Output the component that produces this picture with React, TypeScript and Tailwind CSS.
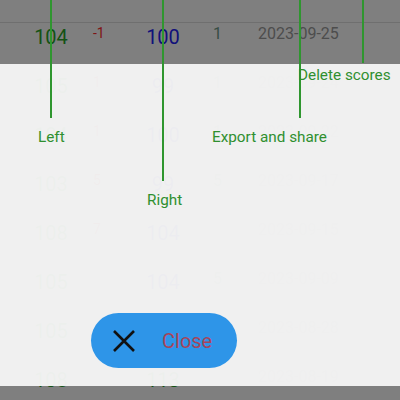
import React from "react";

type Row = {
  left: string;
  diff: string;
  right: string;
  games: string;
  date: string;
  rightColor?: string;
};

const rows: Row[] = [
  { left: "104", diff: "-1", right: "100", games: "1", date: "2023-09-25" },
  { left: "105", diff: "1", right: "99", games: "1", date: "2023-09-24" },
  { left: "104", diff: "1", right: "100", games: "1", date: "2023-09-22" },
  { left: "103", diff: "5", right: "99", games: "5", date: "2023-09-17" },
  { left: "108", diff: "7", right: "104", games: "", date: "2023-09-15" },
  { left: "105", diff: "", right: "104", games: "5", date: "2023-09-09" },
  { left: "105", diff: "", right: "109", games: "4", date: "2023-08-28" },
  { left: "108", diff: "", right: "113", games: "", date: "2023-08-19", rightColor: "text-[#2aa52a]" },
];

const ScoreRow = ({ row }: { row: Row }) => (
  <div className="flex h-[49px] items-start border-t border-[#dedede]">
    <div className="w-[90px] pl-[12px] text-center text-[20px] leading-[28px] text-[#2aa52a]">
      {row.left}
    </div>
    <div className="w-[30px] pl-[3px] text-[14px] leading-[20px] text-[#ff2a2a]">
      {row.diff}
    </div>
    <div
      className={`w-[86px] text-center text-[20px] leading-[28px] ${row.rightColor ?? "text-[#2323f5]"}`}
    >
      {row.right}
    </div>
    <div className="w-[44px] pl-[7px] text-[16px] leading-[22px] text-[#6f9a88]">
      {row.games}
    </div>
    <div className="pl-[8px] text-[16px] leading-[22px] text-[#9a9a9a]">
      {row.date}
    </div>
  </div>
);

// coach mark: a green line dropping from the top
const Pointer = ({ x, len }: { x: number; len: number }) => (
  <div
    className="absolute top-0 w-[2px] bg-[#2f962f]"
    style={{ left: x, height: len }}
  />
);

export default function App() {
  return (
    <div
      className="relative h-[400px] w-[400px] overflow-hidden bg-white"
      style={{ fontFamily: "Roboto, 'Noto Sans', sans-serif" }}
    >
      {/* score list underneath */}
      <div className="h-[22px]" />
      {rows.map((r, i) => (
        <ScoreRow key={i} row={r} />
      ))}

      {/* dim layer */}
      <div className="absolute inset-0 bg-black/50" />

      {/* light help panel */}
      <div className="absolute left-0 right-0 top-[64px] h-[322px] bg-[#f5f5f5]/[0.965]" />

      <Pointer x={50} len={118} />
      <Pointer x={162} len={181} />
      <Pointer x={299} len={118} />
      <Pointer x={362} len={63} />

      {/* captions */}
      <div className="absolute left-[38px] top-[127px] text-[15.3px] leading-[20px] text-[#2f8f2f]">
        Left
      </div>
      <div className="absolute left-[147px] top-[190px] text-[15.3px] leading-[20px] text-[#2f8f2f]">
        Right
      </div>
      <div className="absolute left-[212px] top-[127px] text-[15.3px] leading-[20px] text-[#2f8f2f]">
        Export and share
      </div>
      <div className="absolute left-[298px] top-[65px] text-[15.3px] leading-[20px] text-[#2f8f2f]">
        Delete scores
      </div>

      {/* close button */}
      <button className="absolute left-[91px] top-[313px] flex h-[55px] w-[146px] items-center rounded-full bg-[#2e95e8] pl-[21px]">
        <svg width="24" height="24" viewBox="0 0 24 24" className="shrink-0">
          <path
            d="M2 2 L22 22 M22 2 L2 22"
            stroke="#111"
            strokeWidth="2.6"
            fill="none"
          />
        </svg>
        <span className="ml-[26px] text-[20px] leading-[24px] text-[#a8445a]">
          Close
        </span>
      </button>
    </div>
  );
}
